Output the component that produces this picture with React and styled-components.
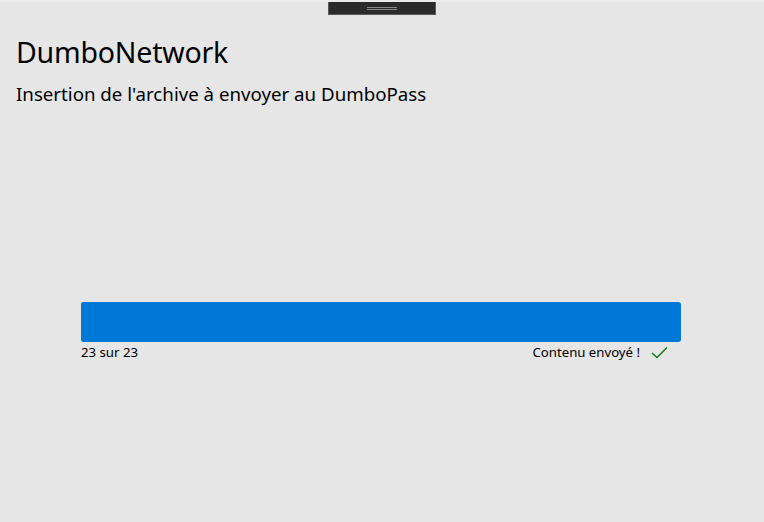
import styled, { createGlobalStyle } from "styled-components";

const Global = createGlobalStyle`
  html, body {
    margin: 0;
    padding: 0;
    background: #e6e6e6;
  }
  body {
    font-family: "Noto Sans", "Open Sans", sans-serif;
    color: #000;
  }
`;

const Page = styled.div`
  /* Display & Box Model */
  width: 764px;
  height: 522px;
  box-sizing: border-box;
  border-top: 2px solid #ececec;
  display: flex;
  flex-direction: column;
  overflow: hidden;
  background: #e6e6e6;
`;

const Top = styled.div`
  display: flex;
  justify-content: center;
  height: 0;
  padding-right: 1px;
`;

const Handle = styled.div`
  width: 106px;
  height: 11px;
  flex-shrink: 0;
  background: #2b2b2b;
  border: 1px solid #5a5a5a;
  border-top: none;
  display: flex;
  flex-direction: column;
  align-items: center;
  justify-content: center;
  gap: 1px;
  padding-top: 1px;

  span {
    display: block;
    width: 30px;
    height: 1px;
    background: #8a8a8a;
  }
`;

const Header = styled.div`
  padding: 32px 0 0 16px;
`;

const Title = styled.h1`
  margin: 0;
  font-size: 28.5px;
  font-weight: 400;
  line-height: 37px;
  letter-spacing: -0.2px;
`;

const Subtitle = styled.h2`
  margin: 10px 0 0;
  font-size: 18.7px;
  font-weight: 400;
  line-height: 26px;
`;

const Progress = styled.div`
  width: 600px;
  margin: 195px 0 0 81px;
`;

const Bar = styled.div`
  height: 40px;
  border-radius: 2px;
  background: #e6e6e6;
  overflow: hidden;
`;

const Fill = styled.div`
  height: 100%;
  background: #0078d7;
  border-radius: 2px;
`;

const Info = styled.div`
  display: flex;
  justify-content: space-between;
  align-items: center;
  margin-top: 1px;
  font-size: 13.2px;
  line-height: 18px;
`;

const Status = styled.div`
  display: flex;
  align-items: center;
  gap: 11px;
  padding-right: 13px;
`;

function App() {
  const done = 23;
  const total = 23;

  return (
    <Page>
      <Global />
      <Top>
        <Handle>
          <span />
          <span />
        </Handle>
      </Top>
      <Header>
        <Title>DumboNetwork</Title>
        <Subtitle>Insertion de l'archive à envoyer au DumboPass</Subtitle>
      </Header>
      <Progress>
        <Bar>
          <Fill style={{ width: `${(done / total) * 100}%` }} />
        </Bar>
        <Info>
          <span>
            {done} sur {total}
          </span>
          <Status>
            <span>Contenu envoyé !</span>
            <svg width="17" height="13" viewBox="0 0 17 13">
              <path d="M1 7 L6 11.5 L16 1.5" fill="none" stroke="#107c10" strokeWidth="1.4" />
            </svg>
          </Status>
        </Info>
      </Progress>
    </Page>
  );
}

export default App;
